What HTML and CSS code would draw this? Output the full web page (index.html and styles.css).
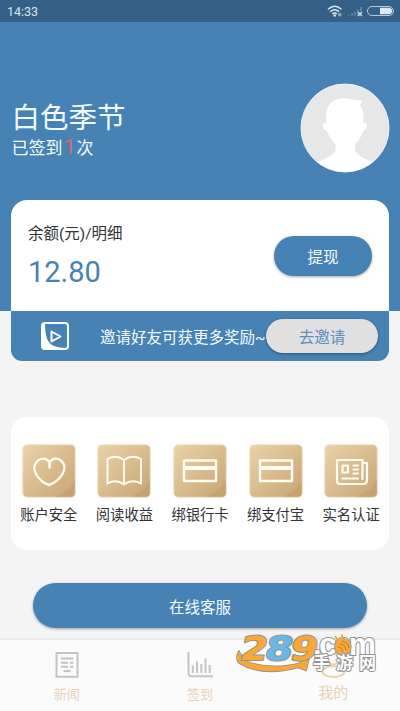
FILE: index.html
```html
<!DOCTYPE html>
<html lang="zh-CN">
<head>
<meta charset="utf-8">
<title>我的</title>
<link rel="stylesheet" href="styles.css">
</head>
<body>
<svg width="0" height="0" class="defs">
  <defs>
    <linearGradient id="gold" x1="0" y1="0" x2="1" y2="1">
      <stop offset="0" stop-color="#ebd2a9"/>
      <stop offset="1" stop-color="#c8a574"/>
    </linearGradient>
    <symbol id="tile" viewBox="0 0 54 54">
      <rect x=".7" y=".7" width="52.6" height="52.6" rx="4.5" fill="url(#gold)" stroke="#f3e5c6" stroke-width="1"/>
      <path d="M53 36Q47 48 32 53H49Q53 53 53 49Z" fill="#b8935f" opacity=".3"/>
    </symbol>
  </defs>
</svg>
<div class="app">
  <header class="top">
    <div class="status">
      <span>14:33</span>
      <svg width="70" height="16" viewBox="0 0 70 16" fill="none">
        <g stroke="#dbe5ee" stroke-width="1.5">
          <path d="M1 6.2Q7.700 .2 14.400 6.200M3.300 8.700Q7.700 4.800 12.100 8.700M5.400 11Q7.700 9 10 11"/>
        </g>
        <circle cx="7.700" cy="12.500" r="1.300" fill="#dbe5ee"/>
        <circle cx="12.800" cy="11.800" r="1.800" fill="#91abc2"/>
        <path d="M22 12.500V11.500M25 12.500V10M28 12.500V8.500M31 12.500V6.500M34 8.500V4" stroke="#5c81a2" stroke-width="2"/>
        <path d="M31 9L35 13M35 9L31 13" stroke="#dbe5ee" stroke-width="1.200"/>
        <rect x="40.500" y="3.500" width="26" height="9" rx="4.500" stroke="#b9cbdb"/>
        <path d="M53 4.800H61.500Q65.300 5 65.300 8T61.500 11.300H53Z" fill="#dfe8f0"/>
      </svg>
    </div>
    <div class="profile">
      <div>
        <div class="name">白色季节</div>
        <div class="signed">已签到<b>1</b>次</div>
      </div>
      <svg class="avatar" width="90" height="90" viewBox="0 0 90 90">
        <clipPath id="round"><circle cx="45" cy="45" r="43.800"/></clipPath>
        <circle cx="45" cy="45" r="44" fill="#e7e7e7" stroke="#eef5fa" stroke-width="1"/>
        <path clip-path="url(#round)" fill="#fff" d="M26 40V31C27 20 35 15 44 15C50 15 54 18 62 17.500Q62 20 60 22Q63.500 27 63.500 33V40Q67 39 67 43Q66 47 63 48.500Q60 57 55 61V67Q56 73 73 79V90H17V79Q34 73 35.500 67V61Q30 56 27 48.500Q23 46 22.500 42Q23 39 26 40Z"/>
      </svg>
    </div>
  </header>

  <section class="wallet">
    <div class="balance">
      <div>
        <div class="label">余额(元)/明细</div>
        <div class="amount">12.80</div>
      </div>
      <div class="btn withdraw">提现</div>
    </div>
    <div class="invite">
      <svg width="30" height="30" viewBox="0 0 30 30">
        <rect x="2" y="2" width="26" height="26" rx="3" fill="none" stroke="#fff" stroke-width="2"/>
        <path d="M2 3H5Q5 20 12 24Q17 27 27 27V28H5Q2 28 2 25Z" fill="#fff"/>
        <path d="M11.500 10.500V20.500L20.500 15.500Z" fill="none" stroke="#fff" stroke-width="2" stroke-linejoin="round"/>
      </svg>
      <span>邀请好友可获更多奖励~</span>
      <div class="btn go">去邀请</div>
    </div>
  </section>

  <section class="tools">
    <div class="tool">
      <svg width="54" height="54" viewBox="0 0 54 54"><use href="#tile"/>
        <path d="M27.500 18.500C25 14 20 13.700 16.500 16.200C12 19.500 11.200 25 14 30C17 35.500 22 39.300 27 41C32 39.300 37.500 35 40.500 30C43.500 25 43 19.500 38.500 16.200C35 13.700 30 14 27.500 18.500V23.500" fill="none" stroke="#fffdf2" stroke-width="2.400" stroke-linecap="round" stroke-linejoin="round"/></svg>
      <span>账户安全</span>
    </div>
    <div class="tool">
      <svg width="54" height="54" viewBox="0 0 54 54"><use href="#tile"/>
        <path d="M27 16Q19 10 10.500 15V39.500Q19 34.500 27 40.500Q35 34.500 44 39.500V15Q35 10 27 16V40" fill="none" stroke="#fffdf2" stroke-width="1.900"/></svg>
      <span>阅读收益</span>
    </div>
    <div class="tool">
      <svg width="54" height="54" viewBox="0 0 54 54"><use href="#tile"/>
        <path d="M11 16.500H43V37H11Z" fill="none" stroke="#fffdf2" stroke-width="2.400" stroke-linejoin="round"/><path d="M11 24H43" stroke="#fffdf2" stroke-width="4"/></svg>
      <span>绑银行卡</span>
    </div>
    <div class="tool">
      <svg width="54" height="54" viewBox="0 0 54 54"><use href="#tile"/>
        <path d="M11 16.500H43V37H11Z" fill="none" stroke="#fffdf2" stroke-width="2.400" stroke-linejoin="round"/><path d="M11 24H43" stroke="#fffdf2" stroke-width="4"/></svg>
      <span>绑支付宝</span>
    </div>
    <div class="tool">
      <svg width="54" height="54" viewBox="0 0 54 54"><use href="#tile"/>
        <g fill="none" stroke="#fffdf2" stroke-width="2.200" stroke-linejoin="round" stroke-linecap="round">
          <path d="M38.500 35V16H13V37Q13 40 16 40H39Q43 40 43 36V19H39"/>
          <path d="M18.500 21.500H24V28.500H18.500ZM29.500 21.500H34M29.500 25.500H34M29.500 29.500H34M18.500 34.500H34"/>
        </g></svg>
      <span>实名认证</span>
    </div>
  </section>

  <div class="btn service">在线客服</div>

  <nav class="tabs">
    <div class="tab">
      <svg width="28" height="28" viewBox="0 0 28 28" fill="none" stroke="#c4c4c4" stroke-width="2">
        <path d="M3.500 1.900H24.500V25.700H3.500ZM8 7.500H20.500M8 11.700H15M17 11.700H20.500M8 15.800H15M17 15.800H20.500M10.500 19.900H17.500"/></svg>
      <span>新闻</span>
    </div>
    <div class="tab">
      <svg width="28" height="28" viewBox="0 0 28 28" fill="none" stroke="#c4c4c4" stroke-width="2">
        <path d="M2.500 1V22Q2.500 25.300 6 25.300H27M6.800 22V14.500M11 22V10.500M15.300 22V13M19.500 22V7.500M23.700 22V14"/></svg>
      <span>签到</span>
    </div>
    <div class="tab active">
      <svg width="28" height="28" viewBox="0 0 28 28" fill="none" stroke="#e8d3b0" stroke-width="2">
        <circle cx="14" cy="8" r="5.500"/><ellipse cx="14.500" cy="20.500" rx="11" ry="5.500"/></svg>
      <span>我的</span>
    </div>
  </nav>

  <svg class="mark" width="160" height="60" viewBox="-4 -10 160 60">
    <g stroke="#929292" stroke-width="2" paint-order="stroke" stroke-linejoin="round">
      <path d="M3 17Q-1 24 3 29Q26 43 62 33.500L70 36.500L74 20L63 26.500L65 29Q32 37 7 26Z" fill="#f9a737" stroke-width="1.800"/>
      <g transform="translate(4.500 25.500) skewX(-11)" class="digits">
        <text x="-2" textLength="27.500" lengthAdjust="spacingAndGlyphs" fill="#f9a737">2</text>
        <text x="23" textLength="27.500" lengthAdjust="spacingAndGlyphs" fill="#68b8e8">8</text>
        <text x="48" textLength="27.500" lengthAdjust="spacingAndGlyphs" fill="#f9a737">9</text>
      </g>
      <text class="com" x="77" y="21">.</text>
      <text class="com" x="83" y="21" textLength="18" lengthAdjust="spacingAndGlyphs">c</text>
      <text class="com" x="98" y="21" textLength="18" lengthAdjust="spacingAndGlyphs">o</text>
      <text class="com" x="113" y="21" textLength="27" lengthAdjust="spacingAndGlyphs">m</text>
      <circle cx="107" cy="12.500" r="8" fill="#f9a737" stroke-width="1.200"/>
      <path d="M101.500 5.500L99 2M106 4.500V.5" stroke="#f9a737" stroke-width="2"/>
      <path d="M104 10Q109 10 110 16M106 7Q112 8 113 14M102 13Q106 13 107 18" fill="none" stroke="#b67d2c" stroke-width="1"/>
      <text class="cn" x="77" y="35" textLength="63">手游网</text>
    </g>
  </svg>
</div>
</body>
</html>
```

FILE: styles.css
```css
* { box-sizing: border-box; }
body {
  margin: 0;
  font-family: Roboto, "Noto Sans CJK SC", sans-serif;
  background: #f4f4f4;
  color: #333;
}
.defs { position: absolute; }
.app {
  position: relative;
  width: 400px;
  height: 711px;
  overflow: hidden;
  display: flex;
  flex-direction: column;
}
.top { height: 311px; flex: none; background: #4682b4; color: #f2fbff; }
.status {
  height: 22px;
  padding: 0 3px 0 7px;
  background: #356188;
  display: flex;
  align-items: center;
  justify-content: space-between;
  font-size: 12.500px;
  color: #d5e1eb;
}
.profile {
  display: flex;
  justify-content: space-between;
  padding: 60px 10.500px 0 11.500px;
}
.avatar { margin-top: .5px; }
.name { margin-top: 17px; font-size: 28.500px; line-height: 40px; }
.signed { font-size: 17px; line-height: 24px; margin-top: -3px; }
.signed b { font-weight: 400; color: #e0646c; display: inline-block; width: 14px; text-align: center; font-size: 20px; line-height: 20px; }
.wallet {
  margin: -111px 11px 0;
  flex: none;
  border-radius: 16px 16px 11px 11px;
  background: #fff;
  overflow: hidden;
}
.balance {
  height: 111px;
  padding: 0 17px;
  display: flex;
  align-items: center;
  justify-content: space-between;
}
.label { font-size: 15.500px; line-height: 22px; }
.amount { font-size: 29px; line-height: 34px; margin-top: 10px; color: #4682b4; }
.btn { display: flex; align-items: center; justify-content: center; background: #4682b4; color: #f4fbff; box-shadow: 0 1px 3px rgba(0,0,0,.35); }
.withdraw { width: 98px; height: 40px; border-radius: 20px; font-size: 15.500px; }
.invite {
  height: 50px;
  padding: 0 11px 0 29px;
  background: #4682b4;
  color: #f4fbff;
  display: flex;
  align-items: center;
  font-size: 15.500px;
  white-space: nowrap;
}
.invite span { margin-left: 30px; width: 166px; }
.go { width: 112px; height: 34px; border-radius: 17px; background: #e0e0e0; color: #5f8fb8; }
.tools {
  flex: none;
  margin: 56px 11px 0;
  height: 133px;
  padding: 27px 0 0;
  border-radius: 16px;
  background: #fff;
  display: grid;
  grid-template-columns: repeat(5, 75.600px);
}
.tool { display: flex; flex-direction: column; align-items: center; font-size: 14.300px; line-height: 20px; }
.tool span { margin-top: 7px; }
.service { flex: none; margin: 33px 33px 0; height: 45px; border-radius: 23px; font-size: 15.500px; }
.tabs {
  flex: none;
  height: 71px;
  margin-top: 12px;
  background: #fbfbfb;
  box-shadow: 0 -1px 3px rgba(0,0,0,.08);
  display: grid;
  grid-template-columns: repeat(3, 1fr);
}
.tab { display: flex; flex-direction: column; align-items: center; padding-top: 11px; font-size: 13px; line-height: 19px; color: #e6d2b5; }
.tab span { margin-top: 6px; }
.active { font-size: 15px; }
.active span { margin-top: 5px; }
.mark { position: absolute; left: 232px; top: 624px; }
.digits { font: 700 33px "DejaVu Sans", sans-serif; }
.com { font: 700 31px "Liberation Sans", sans-serif; fill: #fff; }
.cn { font: 700 17px "Noto Sans CJK SC", sans-serif; fill: #fff; }
```
